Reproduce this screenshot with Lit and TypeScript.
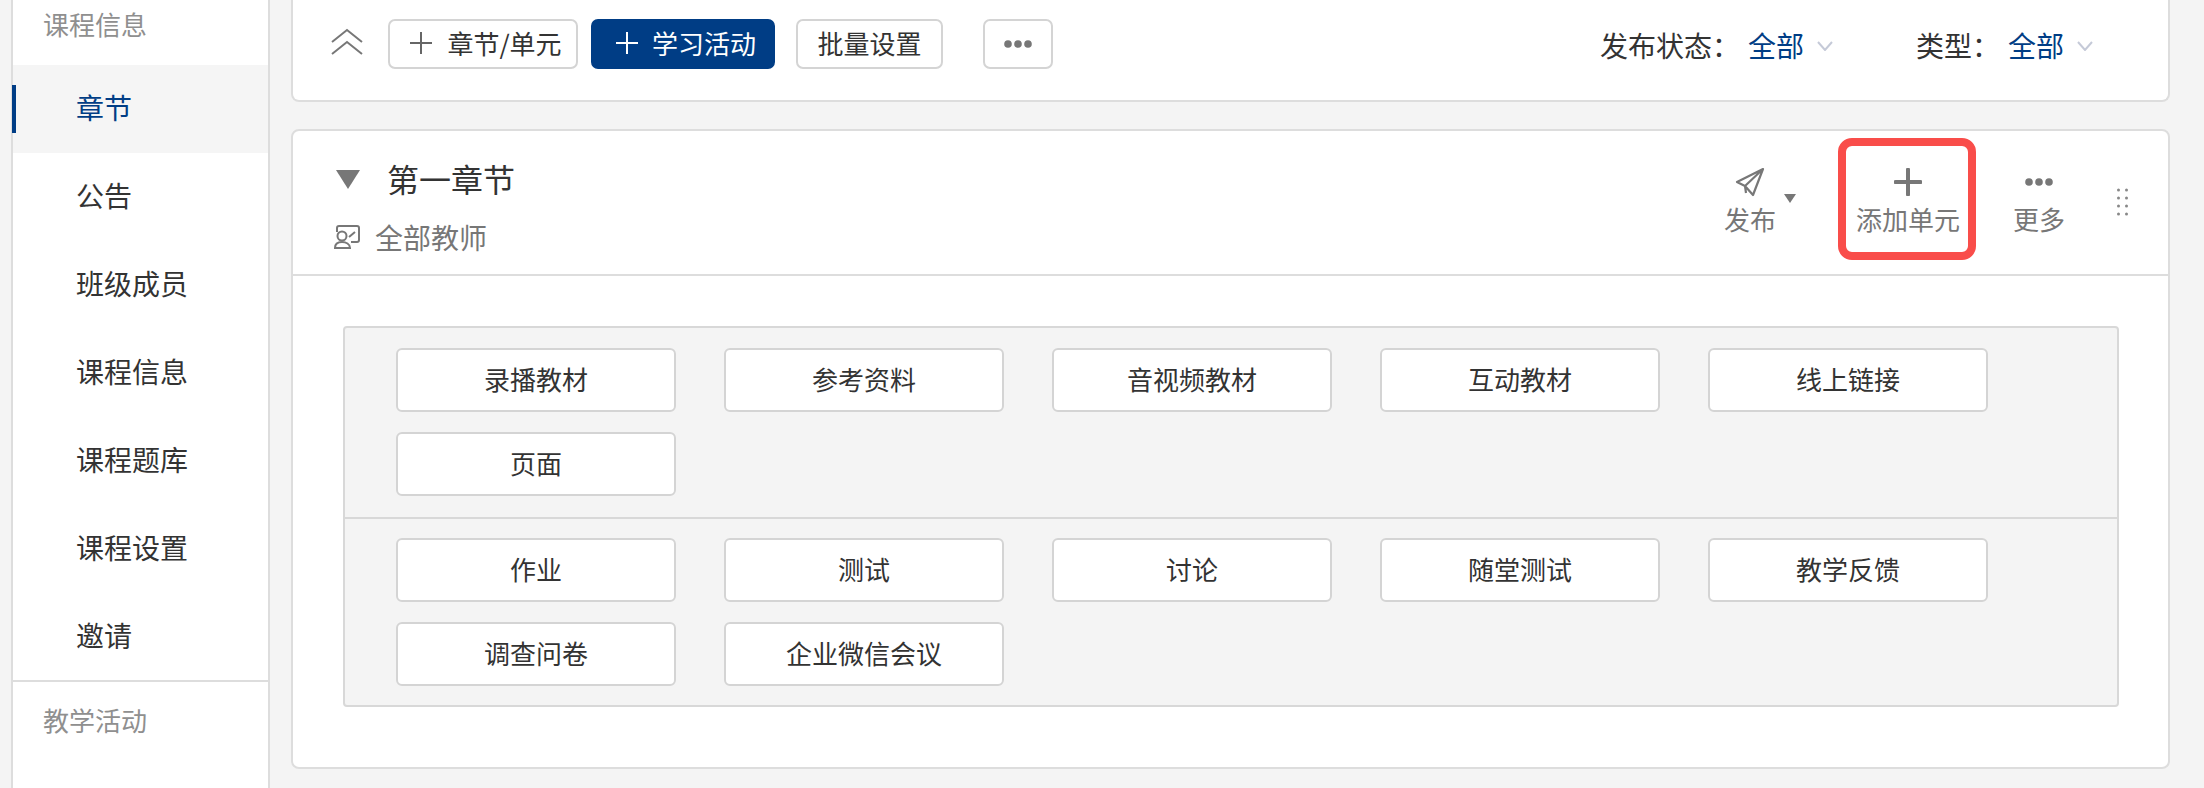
import { LitElement, html, css } from "lit";
import { customElement } from "lit/decorators.js";

const nav = ["章节", "公告", "班级成员", "课程信息", "课程题库", "课程设置", "邀请"];
const group1 = ["录播教材", "参考资料", "音视频教材", "互动教材", "线上链接", "页面"];
const group2 = ["作业", "测试", "讨论", "随堂测试", "教学反馈", "调查问卷", "企业微信会议"];

const plus = (c: string) => html`<svg class="tplus" width="22" height="22" viewBox="0 0 22 22"><path d="M11 0v22M0 11h22" stroke=${c} stroke-width="2" fill="none"/></svg>`;
const dots = html`<svg width="28" height="8" viewBox="0 0 28 8" fill="#777"><circle cx="4" cy="4" r="3.8"/><circle cx="14" cy="4" r="3.8"/><circle cx="24" cy="4" r="3.8"/></svg>`;
const chev = (cls: string) => html`<svg class="chev ${cls}" width="16" height="10" viewBox="0 0 16 10"><path d="M1 1l7 8 7-8" fill="none" stroke="#c5cad8" stroke-width="2"/></svg>`;

@customElement("app-root")
export class AppRoot extends LitElement {
  static styles = css`
    :host { display: block; font-family: "Noto Sans CJK SC", "Liberation Sans", sans-serif; color: #333; }
    * { box-sizing: border-box; }
    .page { display: flex; height: 788px; overflow: hidden; background: #f4f4f4; padding-left: 11px; padding-right: 34px; }
    .side { width: 259px; flex: none; background: #fff; border-left: 2px solid #ddd; border-right: 2px solid #ddd; }
    .sec { height: 65px; padding: 6px 0 0 30px; font-size: 26px; line-height: 36px; color: #8f8f8f; }
    .sec.two { height: 106px; padding-top: 20px; }
    .nav { border-bottom: 2px solid #ddd; height: 617px; }
    .item { height: 88px; padding-left: 63px; font-size: 28px; line-height: 85px; color: #333; position: relative; }
    .item.on { background: #f5f5f5; color: #003d85; }
    .item.on::before { content: ""; position: absolute; left: -1px; top: 20px; width: 4px; height: 48px; background: #003d85; }
    .main { flex: 1; min-width: 0; margin-left: 21px; display: flex; flex-direction: column; gap: 27px; }
    .card { background: #fff; border: 2px solid #ddd; border-radius: 8px; }
    .top { height: 102px; border-top: 0; border-top-left-radius: 0; border-top-right-radius: 0; display: flex; align-items: flex-start; padding: 19px 75px 0 38px; }
    .collapse { margin-top: 9px; margin-right: 25px; display: block; }
    .btn { height: 50px; display: flex; align-items: center; justify-content: center; border: 2px solid #d4d4d4; border-radius: 7px; background: #fff; font-size: 26px; color: #333; line-height: 36px; padding-bottom: 2px; }
    .b1 { width: 190px; margin-right: 13px; gap: 15px; padding-left: 6px; }
    .b2 { width: 184px; margin-right: 21px; gap: 14px; padding-left: 6px; background: #003d85; border-color: #003d85; color: #fff; }
    .b3 { width: 147px; margin-right: 40px; }
    .b4 { width: 70px; padding-bottom: 0; }
    .filters { margin-left: auto; display: flex; align-items: center; height: 52px; font-size: 28px; line-height: 50px; }
    .flabel { margin-right: 8px; }
    .fval { color: #003d85; margin-right: 13px; }
    .chev { margin-right: 83px; margin-top: 2px; }
    .chev.last { margin-right: 0; }
    .head { height: 145px; border-bottom: 2px solid #ddd; display: flex; align-items: flex-start; padding-right: 40px; }
    .hl { padding: 24px 0 0 41px; flex: 1; }
    .title { display: flex; align-items: center; height: 46px; font-size: 32px; color: #333; }
    .tri { margin-right: 26px; margin-left: 1px; display: block; margin-top: 3px; }
    .who { display: flex; align-items: center; margin-top: 14px; height: 44px; font-size: 28px; color: #777; gap: 15px; }
    .acts { display: flex; align-items: flex-start; padding-top: 7px; }
    .act { display: flex; flex-direction: column; align-items: center; color: #777; font-size: 26px; line-height: 36px; }
    .ic { height: 32px; display: flex; align-items: center; justify-content: center; margin-bottom: 3px; }
    .pub { flex-direction: row; align-items: flex-start; padding-top: 28px; margin-right: 42px; }
    .pubc { display: flex; flex-direction: column; align-items: center; }
    .pubt { margin: 28px 0 0 8px; display: block; }
    .add { width: 138px; height: 122px; border: 8px solid #f94d4a; border-radius: 14px; padding: 20px 0 0 2px; margin-right: 37px; }
    .more { padding-top: 28px; margin-right: 52px; }
    .grip { margin-top: 50px; display: block; }
    .body { padding: 50px 49px 60px 50px; }
    .box { background: #f4f4f4; border: 2px solid #d8d8d8; border-radius: 4px; height: 381px; }
    .grp { display: grid; grid-template-columns: repeat(5, 280px); grid-auto-rows: 64px; align-content: start; column-gap: 48px; row-gap: 20px; padding: 20px 0 0 51px; height: 189px; }
    .grp + .grp { border-top: 2px solid #d8d8d8; height: 188px; padding-top: 19px; }
    .tile { height: 64px; background: #fff; border: 2px solid #d4d4d4; border-radius: 6px; font-size: 26px; line-height: 57px; text-align: center; color: #333; }
  `;

  render() {
    return html`<div class="page">
      <aside class="side">
        <div class="sec">课程信息</div>
        <div class="nav">${nav.map((n, i) => html`<div class="item ${i === 0 ? "on" : ""}">${n}</div>`)}</div>
        <div class="sec two">教学活动</div>
      </aside>
      <main class="main">
        <div class="card top">
          <svg class="collapse" width="32" height="28" viewBox="0 0 32 28"><path d="M1 14L16 2l15 12M1 26l15-12 15 12" fill="none" stroke="#777" stroke-width="2"/></svg>
          <div class="btn b1">${plus("#666")}<span>章节/单元</span></div>
          <div class="btn b2">${plus("#fff")}<span>学习活动</span></div>
          <div class="btn b3">批量设置</div>
          <div class="btn b4">${dots}</div>
          <div class="filters">
            <span class="flabel">发布状态：</span><span class="fval">全部</span>${chev("")}
            <span class="flabel">类型：</span><span class="fval">全部</span>${chev("last")}
          </div>
        </div>
        <div class="card">
          <div class="head">
            <div class="hl">
              <div class="title"><svg class="tri" width="26" height="19" viewBox="0 0 26 19"><path d="M1 0h24L13 19z" fill="#777"/></svg><span>第一章节</span></div>
              <div class="who">
                <svg width="26" height="24" viewBox="0 0 26 24" fill="none" stroke="#777" stroke-width="2"><path d="M3 7V3a2 2 0 0 1 2-2h18a2 2 0 0 1 2 2v12a2 2 0 0 1-2 2h-6"/><circle cx="8" cy="11" r="4.5"/><path d="M1 23c0-4 3-6 7-6s8 2 8 6z"/><path d="M15 12l6-5"/></svg>
                <span>全部教师</span>
              </div>
            </div>
            <div class="acts">
              <div class="act pub">
                <div class="pubc">
                  <div class="ic"><svg width="30" height="30" viewBox="0 0 30 30" fill="none" stroke="#777" stroke-width="2.2" stroke-linejoin="round"><path d="M28 2L2 15l8 4 8 9zM28 2L10 19l1 7"/></svg></div>
                  <span>发布</span>
                </div>
                <svg class="pubt" width="12" height="9" viewBox="0 0 12 9"><path d="M0 0h12L6 9z" fill="#777"/></svg>
              </div>
              <div class="act add">
                <div class="ic"><svg width="28" height="28" viewBox="0 0 28 28"><path d="M14 1.5v25M1.5 14h25" stroke="#777" stroke-width="4" stroke-linecap="round" fill="none"/></svg></div>
                <span>添加单元</span>
              </div>
              <div class="act more">
                <div class="ic">${dots}</div>
                <span>更多</span>
              </div>
              <svg class="grip" width="11" height="28" viewBox="0 0 11 28" fill="#888"><circle cx="1.5" cy="2" r="1.5"/><circle cx="9.5" cy="2" r="1.5"/><circle cx="1.5" cy="10" r="1.5"/><circle cx="9.5" cy="10" r="1.5"/><circle cx="1.5" cy="18" r="1.5"/><circle cx="9.5" cy="18" r="1.5"/><circle cx="1.5" cy="26" r="1.5"/><circle cx="9.5" cy="26" r="1.5"/></svg>
            </div>
          </div>
          <div class="body">
            <div class="box">
              <div class="grp">${group1.map((t) => html`<div class="tile">${t}</div>`)}</div>
              <div class="grp">${group2.map((t) => html`<div class="tile">${t}</div>`)}</div>
            </div>
          </div>
        </div>
      </main>
    </div>`;
  }
}
